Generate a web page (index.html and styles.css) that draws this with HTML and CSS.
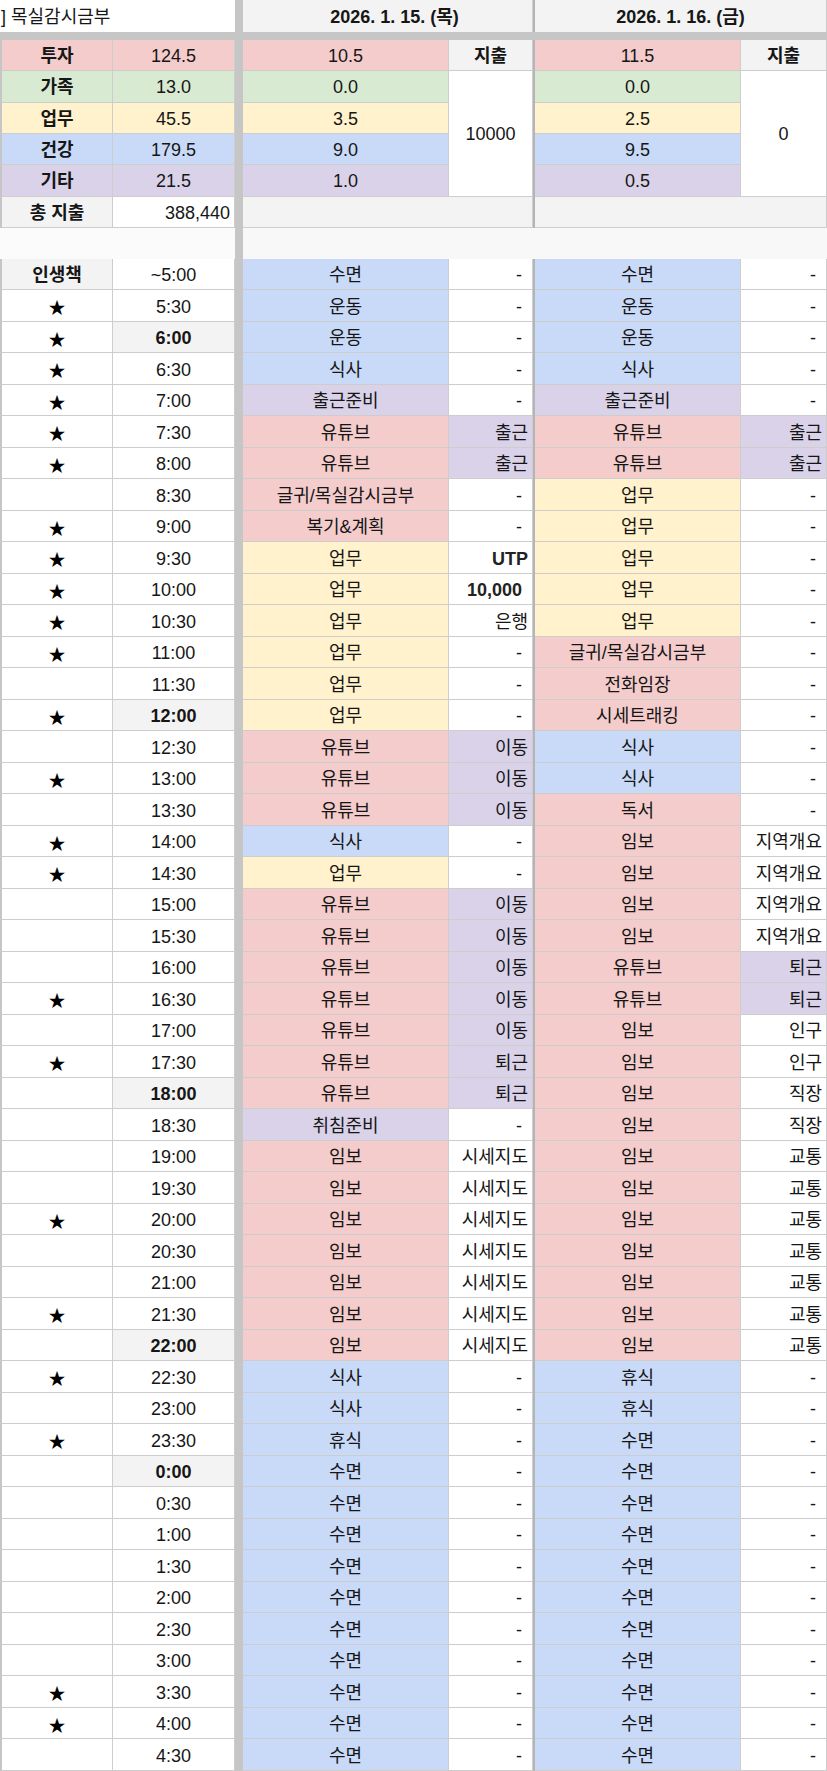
FILE: index.html
```html
<!DOCTYPE html>
<html lang="ko">
<head>
<meta charset="utf-8">
<title>목실감시금부</title>
<link rel="stylesheet" href="styles.css">
</head>
<body>
<div class="sheet">
  <div class="sep"></div>
  <div class="sep2"></div>

  <div class="c title">] 목실감시금부</div>
  <div class="c date d1">2026. 1. 15. (목)</div>
  <div class="c date d2">2026. 1. 16. (금)</div>
  <div class="band"></div>

  <div class="c l r bold">투자</div><div class="c r">124.5</div><div class="c r">10.5</div><div class="c h bold">지출</div><div class="c r">11.5</div><div class="c h bold">지출</div>
  <div class="c l g bold">가족</div><div class="c g">13.0</div><div class="c g">0.0</div><div class="c w m1">10000</div><div class="c g">0.0</div><div class="c w m2">0</div>
  <div class="c l y bold">업무</div><div class="c y">45.5</div><div class="c y">3.5</div><div class="c y">2.5</div>
  <div class="c l b bold">건강</div><div class="c b">179.5</div><div class="c b">9.0</div><div class="c b">9.5</div>
  <div class="c l p bold">기타</div><div class="c p">21.5</div><div class="c p">1.0</div><div class="c p">0.5</div>
  <div class="c l h bold">총 지출</div><div class="c w num">388,440</div><div class="c h tot1"></div><div class="c h tot2"></div>

  <div class="blank bl1"></div><div class="blank bl2"></div>

  <div class="c l h bold">인생책</div><div class="c t">~5:00</div><div class="c b">수면</div><div class="c d">-</div><div class="c b">수면</div><div class="c d">-</div>
  <div class="c l s">★</div><div class="c t">5:30</div><div class="c b">운동</div><div class="c d">-</div><div class="c b">운동</div><div class="c d">-</div>
  <div class="c l s">★</div><div class="c t k">6:00</div><div class="c b">운동</div><div class="c d">-</div><div class="c b">운동</div><div class="c d">-</div>
  <div class="c l s">★</div><div class="c t">6:30</div><div class="c b">식사</div><div class="c d">-</div><div class="c b">식사</div><div class="c d">-</div>
  <div class="c l s">★</div><div class="c t">7:00</div><div class="c p">출근준비</div><div class="c d">-</div><div class="c p">출근준비</div><div class="c d">-</div>
  <div class="c l s">★</div><div class="c t">7:30</div><div class="c r">유튜브</div><div class="c n p">출근</div><div class="c r">유튜브</div><div class="c n p">출근</div>
  <div class="c l s">★</div><div class="c t">8:00</div><div class="c r">유튜브</div><div class="c n p">출근</div><div class="c r">유튜브</div><div class="c n p">출근</div>
  <div class="c l s"></div><div class="c t">8:30</div><div class="c r">글귀/목실감시금부</div><div class="c d">-</div><div class="c y">업무</div><div class="c d">-</div>
  <div class="c l s">★</div><div class="c t">9:00</div><div class="c r">복기&amp;계획</div><div class="c d">-</div><div class="c y">업무</div><div class="c d">-</div>
  <div class="c l s">★</div><div class="c t">9:30</div><div class="c y">업무</div><div class="c n semi">UTP</div><div class="c y">업무</div><div class="c d">-</div>
  <div class="c l s">★</div><div class="c t">10:00</div><div class="c y">업무</div><div class="c d semi">10,000</div><div class="c y">업무</div><div class="c d">-</div>
  <div class="c l s">★</div><div class="c t">10:30</div><div class="c y">업무</div><div class="c n">은행</div><div class="c y">업무</div><div class="c d">-</div>
  <div class="c l s">★</div><div class="c t">11:00</div><div class="c y">업무</div><div class="c d">-</div><div class="c r">글귀/목실감시금부</div><div class="c d">-</div>
  <div class="c l s"></div><div class="c t">11:30</div><div class="c y">업무</div><div class="c d">-</div><div class="c r">전화임장</div><div class="c d">-</div>
  <div class="c l s">★</div><div class="c t k">12:00</div><div class="c y">업무</div><div class="c d">-</div><div class="c r">시세트래킹</div><div class="c d">-</div>
  <div class="c l s"></div><div class="c t">12:30</div><div class="c r">유튜브</div><div class="c n p">이동</div><div class="c b">식사</div><div class="c d">-</div>
  <div class="c l s">★</div><div class="c t">13:00</div><div class="c r">유튜브</div><div class="c n p">이동</div><div class="c b">식사</div><div class="c d">-</div>
  <div class="c l s"></div><div class="c t">13:30</div><div class="c r">유튜브</div><div class="c n p">이동</div><div class="c r">독서</div><div class="c d">-</div>
  <div class="c l s">★</div><div class="c t">14:00</div><div class="c b">식사</div><div class="c d">-</div><div class="c r">임보</div><div class="c n">지역개요</div>
  <div class="c l s">★</div><div class="c t">14:30</div><div class="c y">업무</div><div class="c d">-</div><div class="c r">임보</div><div class="c n">지역개요</div>
  <div class="c l s"></div><div class="c t">15:00</div><div class="c r">유튜브</div><div class="c n p">이동</div><div class="c r">임보</div><div class="c n">지역개요</div>
  <div class="c l s"></div><div class="c t">15:30</div><div class="c r">유튜브</div><div class="c n p">이동</div><div class="c r">임보</div><div class="c n">지역개요</div>
  <div class="c l s"></div><div class="c t">16:00</div><div class="c r">유튜브</div><div class="c n p">이동</div><div class="c r">유튜브</div><div class="c n p">퇴근</div>
  <div class="c l s">★</div><div class="c t">16:30</div><div class="c r">유튜브</div><div class="c n p">이동</div><div class="c r">유튜브</div><div class="c n p">퇴근</div>
  <div class="c l s"></div><div class="c t">17:00</div><div class="c r">유튜브</div><div class="c n p">이동</div><div class="c r">임보</div><div class="c n">인구</div>
  <div class="c l s">★</div><div class="c t">17:30</div><div class="c r">유튜브</div><div class="c n p">퇴근</div><div class="c r">임보</div><div class="c n">인구</div>
  <div class="c l s"></div><div class="c t k">18:00</div><div class="c r">유튜브</div><div class="c n p">퇴근</div><div class="c r">임보</div><div class="c n">직장</div>
  <div class="c l s"></div><div class="c t">18:30</div><div class="c p">취침준비</div><div class="c d">-</div><div class="c r">임보</div><div class="c n">직장</div>
  <div class="c l s"></div><div class="c t">19:00</div><div class="c r">임보</div><div class="c n">시세지도</div><div class="c r">임보</div><div class="c n">교통</div>
  <div class="c l s"></div><div class="c t">19:30</div><div class="c r">임보</div><div class="c n">시세지도</div><div class="c r">임보</div><div class="c n">교통</div>
  <div class="c l s">★</div><div class="c t">20:00</div><div class="c r">임보</div><div class="c n">시세지도</div><div class="c r">임보</div><div class="c n">교통</div>
  <div class="c l s"></div><div class="c t">20:30</div><div class="c r">임보</div><div class="c n">시세지도</div><div class="c r">임보</div><div class="c n">교통</div>
  <div class="c l s"></div><div class="c t">21:00</div><div class="c r">임보</div><div class="c n">시세지도</div><div class="c r">임보</div><div class="c n">교통</div>
  <div class="c l s">★</div><div class="c t">21:30</div><div class="c r">임보</div><div class="c n">시세지도</div><div class="c r">임보</div><div class="c n">교통</div>
  <div class="c l s"></div><div class="c t k">22:00</div><div class="c r">임보</div><div class="c n">시세지도</div><div class="c r">임보</div><div class="c n">교통</div>
  <div class="c l s">★</div><div class="c t">22:30</div><div class="c b">식사</div><div class="c d">-</div><div class="c b">휴식</div><div class="c d">-</div>
  <div class="c l s"></div><div class="c t">23:00</div><div class="c b">식사</div><div class="c d">-</div><div class="c b">휴식</div><div class="c d">-</div>
  <div class="c l s">★</div><div class="c t">23:30</div><div class="c b">휴식</div><div class="c d">-</div><div class="c b">수면</div><div class="c d">-</div>
  <div class="c l s"></div><div class="c t k">0:00</div><div class="c b">수면</div><div class="c d">-</div><div class="c b">수면</div><div class="c d">-</div>
  <div class="c l s"></div><div class="c t">0:30</div><div class="c b">수면</div><div class="c d">-</div><div class="c b">수면</div><div class="c d">-</div>
  <div class="c l s"></div><div class="c t">1:00</div><div class="c b">수면</div><div class="c d">-</div><div class="c b">수면</div><div class="c d">-</div>
  <div class="c l s"></div><div class="c t">1:30</div><div class="c b">수면</div><div class="c d">-</div><div class="c b">수면</div><div class="c d">-</div>
  <div class="c l s"></div><div class="c t">2:00</div><div class="c b">수면</div><div class="c d">-</div><div class="c b">수면</div><div class="c d">-</div>
  <div class="c l s"></div><div class="c t">2:30</div><div class="c b">수면</div><div class="c d">-</div><div class="c b">수면</div><div class="c d">-</div>
  <div class="c l s"></div><div class="c t">3:00</div><div class="c b">수면</div><div class="c d">-</div><div class="c b">수면</div><div class="c d">-</div>
  <div class="c l s">★</div><div class="c t">3:30</div><div class="c b">수면</div><div class="c d">-</div><div class="c b">수면</div><div class="c d">-</div>
  <div class="c l s">★</div><div class="c t">4:00</div><div class="c b">수면</div><div class="c d">-</div><div class="c b">수면</div><div class="c d">-</div>
  <div class="c l s"></div><div class="c t">4:30</div><div class="c b">수면</div><div class="c d">-</div><div class="c b">수면</div><div class="c d">-</div>
</div>
</body>
</html>
```

FILE: styles.css
```css
* { box-sizing: border-box; }

html, body {
  margin: 0;
  padding: 0;
  background: #ffffff;
}

body {
  font-family: "Liberation Sans", "Noto Sans CJK KR", sans-serif;
  color: #161616;
}

.sheet {
  display: grid;
  grid-template-columns: 113px 122px 8px 206px 84px 2px 206px 86px;
  grid-template-rows: 32px 8px repeat(6, 31.333px) 31px repeat(48, 31.5px);
  width: 827px;
  height: 1771px;
  overflow: hidden;
}

.sep {
  grid-column: 3;
  grid-row: 1 / -1;
  background: #c6c6c6;
}

.sep2 {
  grid-column: 6;
  grid-row: 1 / -1;
  background: #b5b5b5;
}

.band {
  grid-column: 1 / -1;
  grid-row: 2;
  background: #c6c6c6;
}

.c {
  display: flex;
  align-items: center;
  justify-content: center;
  font-size: 18px;
  line-height: 1;
  padding-top: 2px;
  white-space: nowrap;
  overflow: hidden;
  border-right: 1px solid #cdcdcd;
  border-bottom: 1px solid #cdcdcd;
  background: #ffffff;
}

.l { border-left: 2px solid #c6c6c6; }

.title {
  grid-column: 1 / span 2;
  grid-row: 1;
  justify-content: flex-start;
  padding-left: 1px;
  border-bottom: none;
  border-right: none;
}

.date {
  grid-row: 1;
  background: #f3f3f3;
  font-weight: bold;
  border-bottom: none;
}
.d1 { grid-column: 4 / span 2; padding-left: 14px; }
.d2 { grid-column: 7 / span 2; }

.m1 { grid-column: 5; grid-row: 4 / span 4; }
.m2 { grid-column: 8; grid-row: 4 / span 4; }
.tot1 { grid-column: 4 / span 2; grid-row: 8; }
.tot2 { grid-column: 7 / span 2; grid-row: 8; }

.blank {
  grid-row: 9;
  background: #f8f8f8;
}
.bl1 { grid-column: 1 / span 2; background: #fbfbfb; }
.bl2 { grid-column: 4 / span 5; }

.bold { font-weight: bold; }
.semi { font-weight: bold; color: #222; }

.r { background: #f4cccc; }
.g { background: #d9ead3; }
.y { background: #fff2cc; }
.b { background: #c9daf8; }
.p { background: #d9d2e9; }
.h { background: #f3f3f3; }
.w { background: #ffffff; }

.num { justify-content: flex-end; padding-right: 4px; }
.n { justify-content: flex-end; padding-right: 4px; }
.d { justify-content: flex-end; padding-right: 10px; }

.s { font-size: 17px; color: #000; padding-top: 6px; }
.k { background: #f3f3f3; font-weight: bold; }
```
